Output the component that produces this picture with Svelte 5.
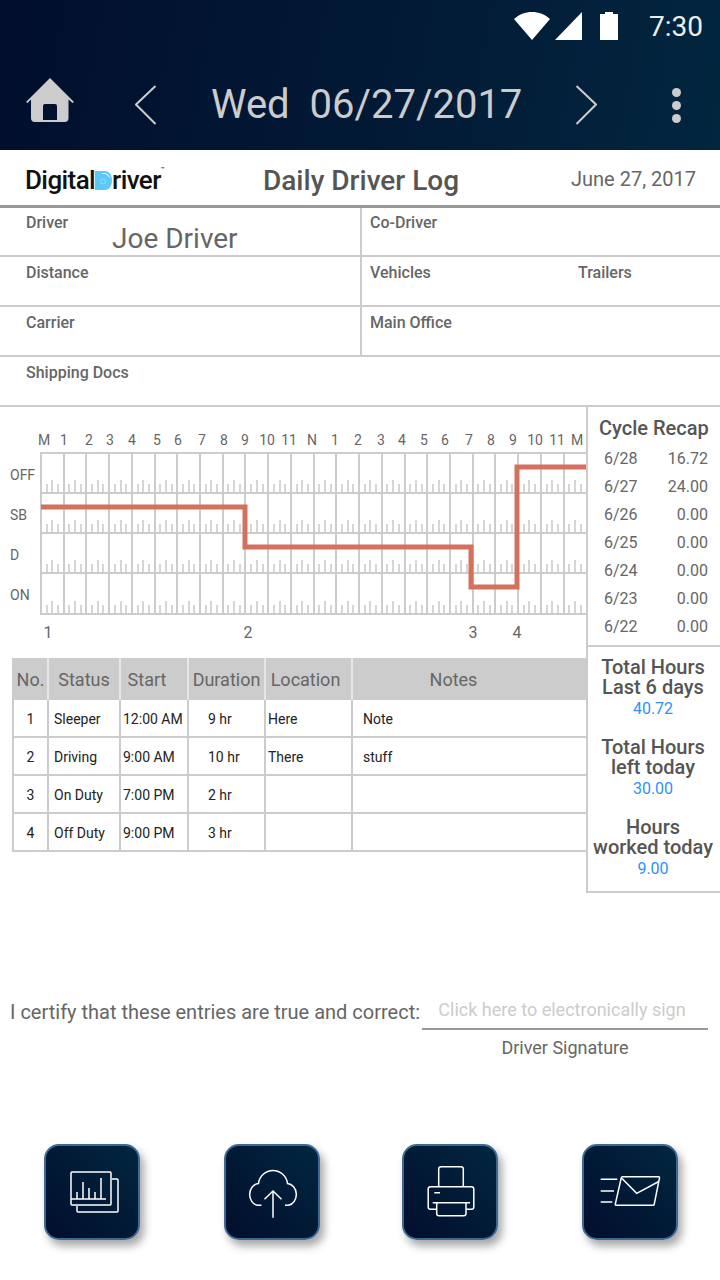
<script lang="ts">
  const hours = [
    ['M', 44], ['1', 64], ['2', 89], ['3', 110], ['4', 132], ['5', 157], ['6', 178], ['7', 202],
    ['8', 224], ['9', 245], ['10', 267], ['11', 289], ['N', 312], ['1', 335], ['2', 358], ['3', 381],
    ['4', 402], ['5', 424], ['6', 445], ['7', 469], ['8', 491], ['9', 513], ['10', 535], ['11', 557], ['M', 577]
  ];
  const statusRows = [['OFF', 475], ['SB', 515], ['D', 555], ['ON', 595]];
  const changeMarks = [['1', 48], ['2', 248], ['3', 473], ['4', 517]];

  const gridLeft = 41;
  const cell = 22.72;
  const rowBottoms = [493, 533, 573, 614];
  const columns = Array.from({ length: 24 }, (_, i) => gridLeft + i * cell);

  const logs = [
    { no: 1, status: 'Sleeper', start: '12:00 AM', duration: '9 hr', location: 'Here', notes: 'Note' },
    { no: 2, status: 'Driving', start: '9:00 AM', duration: '10 hr', location: 'There', notes: 'stuff' },
    { no: 3, status: 'On Duty', start: '7:00 PM', duration: '2 hr', location: '', notes: '' },
    { no: 4, status: 'Off Duty', start: '9:00 PM', duration: '3 hr', location: '', notes: '' }
  ];

  const recap = [
    ['6/28', '16.72'], ['6/27', '24.00'], ['6/26', '0.00'], ['6/25', '0.00'],
    ['6/24', '0.00'], ['6/23', '0.00'], ['6/22', '0.00']
  ];

  const totals = [
    { title: 'Total Hours', sub: 'Last 6 days', value: '40.72' },
    { title: 'Total Hours', sub: 'left today', value: '30.00' },
    { title: 'Hours', sub: 'worked today', value: '9.00' }
  ];
</script>

<div class="page">
  <header class="top">
    <div class="status-bar">
      <svg class="wifi" width="36" height="28" viewBox="0 0 36 28">
        <path d="M18 28L0 7C5 2.5 11 0 18 0s13 2.500 18 7z" fill="#fff" />
      </svg>
      <svg class="signal" width="27" height="28" viewBox="0 0 27 28">
        <path d="M27 0v28H0z" fill="#fff" />
      </svg>
      <svg class="battery" width="18" height="28" viewBox="0 0 18 28">
        <path d="M5 0h8v2h5v26H0V2h5z" fill="#fff" />
      </svg>
      <span class="clock">7:30</span>
    </div>
    <div class="toolbar">
      <svg class="home" width="48" height="44" viewBox="0 0 48 44">
        <path
          fill-rule="evenodd"
          d="M24 0l24 24-1.500 1-4-3.500V40a4 4 0 0 1-4 4H9a4 4 0 0 1-4-4V21.500L1.500 25 0 24zM19 26a2 2 0 0 0-2 2v14h14V28a2 2 0 0 0-2-2z"
          fill="#ccc"
        />
      </svg>
      <svg class="prev" width="22" height="40" viewBox="0 0 22 40">
        <path d="M20.500 1L1 19.500 20.500 39" fill="none" stroke="#ccc" stroke-width="2" />
      </svg>
      <span class="day">Wed  06/27/2017</span>
      <svg class="next" width="22" height="40" viewBox="0 0 22 40">
        <path d="M1.500 1L21 19.500 1.500 39" fill="none" stroke="#ccc" stroke-width="2" />
      </svg>
      <div class="dots"><i></i><i></i><i></i></div>
    </div>
  </header>

  <section class="title-row">
    <div class="logo">
      <span>Digital</span>
      <svg width="17" height="19" viewBox="0 0 17 19">
        <path d="M0 0h10c4 0 7 4 7 9.500S14 19 10 19H0z" fill="#5cc8f5" />
        <path d="M7 2.500h3a6 6 0 0 1 4.500 4" fill="none" stroke="#fff" stroke-width="1" />
        <circle cx="8" cy="10.500" r="2.500" fill="none" stroke="#a8e2fa" stroke-width="0.800" />
      </svg>
      <span>river</span>
      <span class="tm">™</span>
    </div>
    <h1>Daily Driver Log</h1>
    <span class="date">June 27, 2017</span>
  </section>

  <section class="form">
    <div class="row">
      <div class="field left">
        <label for="driver">Driver</label>
        <div class="value" id="driver">Joe Driver</div>
      </div>
      <div class="field"><span class="lbl">Co-Driver</span></div>
    </div>
    <div class="row">
      <div class="field left"><span class="lbl">Distance</span></div>
      <div class="field split">
        <span class="lbl">Vehicles</span>
        <span class="lbl">Trailers</span>
      </div>
    </div>
    <div class="row">
      <div class="field left"><span class="lbl">Carrier</span></div>
      <div class="field"><span class="lbl">Main Office</span></div>
    </div>
    <div class="row wide">
      <div class="field left"><span class="lbl">Shipping Docs</span></div>
    </div>
  </section>

  <section class="main">
    <div class="log">
      <svg class="chart" width="586" height="242" viewBox="0 407 586 242">
        {#each hours as [label, x]}
          <text x={x} y="445" text-anchor="middle" class="hour">{label}</text>
        {/each}
        {#each statusRows as [label, y]}
          <text x="10" y={Number(y) + 5} class="hour">{label}</text>
        {/each}

        {#each rowBottoms as bottom}
          {#each columns as x}
            <rect x={Math.round(x + cell * 0.25) - 1} y={bottom - 9} width="2" height="9" fill="#d6d6d6" />
            <rect x={Math.round(x + cell * 0.5) - 1} y={bottom - 13} width="2" height="13" fill="#d6d6d6" />
            <rect x={Math.round(x + cell * 0.75) - 1} y={bottom - 9} width="2" height="9" fill="#d6d6d6" />
          {/each}
        {/each}

        {#each columns as x}
          <line x1={Math.round(x)} x2={Math.round(x)} y1="453" y2="615" stroke="#ccc" stroke-width="2" />
        {/each}
        <line x1="40" x2="586" y1="453" y2="453" stroke="#ccc" stroke-width="2" />
        {#each rowBottoms as y}
          <line x1="40" x2="586" y1={y} y2={y} stroke="#ccc" stroke-width="2" />
        {/each}

        <path
          d="M41 507H245V547H471V587H517V467H586"
          fill="none"
          stroke="#d4705c"
          stroke-width="5"
        />

        {#each changeMarks as [label, x]}
          <text x={x} y="638" text-anchor="middle" class="mark">{label}</text>
        {/each}
      </svg>

      <table>
        <colgroup>
          <col style="width: 35px" />
          <col style="width: 72px" />
          <col style="width: 68px" />
          <col style="width: 77px" />
          <col style="width: 87px" />
          <col />
        </colgroup>
        <thead>
          <tr>
            <th>No.</th>
            <th>Status</th>
            <th class="h-start">Start</th>
            <th>Duration</th>
            <th class="h-location">Location</th>
            <th class="h-notes">Notes</th>
          </tr>
        </thead>
        <tbody>
          {#each logs as log}
            <tr>
              <td class="no">{log.no}</td>
              <td class="status">{log.status}</td>
              <td class="start">{log.start}</td>
              <td class="duration">{log.duration}</td>
              <td class="location">{log.location}</td>
              <td class="notes">{log.notes}</td>
            </tr>
          {/each}
        </tbody>
      </table>
    </div>

    <aside class="side">
      <div class="recap">
        <h2>Cycle Recap</h2>
        {#each recap as [day, amount]}
          <div class="recap-row"><span>{day}</span><span>{amount}</span></div>
        {/each}
      </div>
      <div class="totals">
        {#each totals as total}
          <div class="total">
            <h3>{total.title}<br />{total.sub}</h3>
            <span>{total.value}</span>
          </div>
        {/each}
      </div>
    </aside>
  </section>

  <section class="certify">
    <span class="statement">I certify that these entries are true and correct:</span>
    <div class="sign">
      <div class="sign-line">Click here to electronically sign</div>
      <div class="sign-caption">Driver Signature</div>
    </div>
  </section>

  <nav class="actions">
    <button type="button" aria-label="Reports">
      <svg viewBox="2 2 92 92">
        <path d="M28 28h38a1 1 0 0 1 1 1v31a1 1 0 0 1-1 1H28a1 1 0 0 1-1-1V29a1 1 0 0 1 1-1z" />
        <path d="M68 35h5a1 1 0 0 1 1 1v31a1 1 0 0 1-1 1H34a1 1 0 0 1-1-1v-5" />
        <path d="M27 55h35M33 55v-7M39 55V38M45 55V44M51 55v-7M57 55V34" />
      </svg>
    </button>
    <button type="button" aria-label="Upload">
      <svg viewBox="2 2 92 92">
        <path d="M37.500 61.300h-4a9.500 11 0 0 1 1-21.800 14.600 14.600 0 0 1 29 0 9.500 11 0 0 1 1 21.800H61" />
        <path d="M49 73.700V47M40.500 55.200L49 47l8.500 8.200" />
      </svg>
    </button>
    <button type="button" aria-label="Print">
      <svg viewBox="2 2 92 92">
        <path d="M36.700 42.700V25a2.300 2.300 0 0 1 2.300-2.300h20a2.300 2.300 0 0 1 2.300 2.300v17.700" />
        <path d="M34 65.300h-5.500a2.300 2.300 0 0 1-2.300-2.300V45a2.300 2.300 0 0 1 2.300-2.300h41a2.300 2.300 0 0 1 2.300 2.300v18a2.300 2.300 0 0 1-2.300 2.300H64" />
        <path d="M30.700 58.700h37.300M34.700 58.700V69.500a2.300 2.300 0 0 0 2.300 2.300h24.700a2.300 2.300 0 0 0 2.300-2.300V58.700M32.300 48.700H38" />
      </svg>
    </button>
    <button type="button" aria-label="Send by email">
      <svg viewBox="2 2 92 92">
        <path d="M40.500 32.700h36a1 1 0 0 1 1 1.200l-5.300 26.400a1.200 1.200 0 0 1-1.200 1H34.300a1 1 0 0 1-1-1.200L39.300 33.700a1.200 1.200 0 0 1 1.200-1z" />
        <path d="M39.500 34l15.200 15.300L76.800 37.500M18.700 35.300h16.600M18.700 47H32M18.700 58h11.600" />
      </svg>
    </button>
  </nav>
</div>

<style>
  :global(body) {
    margin: 0;
    background: #fff;
    font-family: Roboto, "Liberation Sans", sans-serif;
    color: #555;
  }

  .page {
    width: 720px;
    height: 1280px;
    overflow: hidden;
    background: #fff;
  }

  .top {
    height: 150px;
    background: linear-gradient(100deg, #010e2d 0%, #021a36 55%, #02263f 100%);
  }

  .status-bar {
    height: 50px;
    display: flex;
    align-items: flex-start;
    padding-top: 12px;
    box-sizing: border-box;
  }

  .wifi {
    margin-left: 514px;
  }

  .signal {
    margin-left: 5px;
  }

  .battery {
    margin-left: 18px;
  }

  .clock {
    margin-left: 31px;
    margin-top: 1px;
    font-size: 28px;
    line-height: 28px;
    color: #eee;
  }

  .toolbar {
    height: 100px;
    box-sizing: border-box;
    padding-top: 10px;
    display: flex;
    align-items: center;
  }

  .home {
    margin-left: 26px;
    margin-bottom: 10px;
  }

  .prev {
    margin-left: 61px;
  }

  .day {
    margin-left: 54px;
    width: 310px;
    font-size: 40px;
    line-height: 48px;
    color: #ccc;
    white-space: pre;
  }

  .next {
    margin-left: 54px;
  }

  .dots {
    margin-left: 75px;
    display: flex;
    flex-direction: column;
    gap: 4px;
  }

  .dots i {
    display: block;
    width: 9px;
    height: 9px;
    border-radius: 50%;
    background: #ccc;
  }

  .title-row {
    height: 58px;
    box-sizing: border-box;
    border-bottom: 3px solid #999;
    display: flex;
    align-items: center;
    padding: 6px 0 0 25px;
  }

  .logo {
    width: 238px;
    flex: none;
    margin-top: -2px;
    display: flex;
    align-items: center;
    font-size: 26px;
    font-weight: 500;
    letter-spacing: -0.6px;
    color: #111;
  }

  .logo svg {
    margin-top: 1px;
  }

  .tm {
    font-size: 6px;
    align-self: flex-start;
    letter-spacing: 0;
  }

  h1 {
    margin: 0;
    width: 308px;
    flex: none;
    font-size: 28px;
    font-weight: 500;
    color: #555;
  }

  .date {
    margin-top: -4px;
    font-size: 20px;
    color: #666;
    white-space: nowrap;
  }

  .row {
    height: 50px;
    box-sizing: border-box;
    border-bottom: 2px solid #ccc;
    display: grid;
    grid-template-columns: 362px 1fr;
  }

  .row:first-child {
    height: 49px;
  }

  .row.wide {
    grid-template-columns: 1fr;
  }

  .field {
    padding: 7px 0 0 8px;
    font-size: 16px;
    line-height: 18px;
  }

  .row:first-child .field {
    padding-top: 6px;
  }

  .field.left {
    padding-left: 26px;
    border-right: 2px solid #ccc;
  }

  .wide .field.left {
    border-right: 0;
  }

  .field.split {
    display: grid;
    grid-template-columns: 208px 1fr;
  }

  .lbl,
  label {
    font-size: 16px;
    font-weight: 500;
    color: #666;
  }

  .value {
    margin-top: -9px;
    padding-left: 86px;
    font-size: 28px;
    line-height: 32px;
    color: #666;
  }

  .main {
    display: flex;
    align-items: flex-start;
  }

  .log {
    width: 586px;
  }

  .chart {
    display: block;
  }

  .hour {
    font-size: 14px;
    fill: #666;
  }

  .mark {
    font-size: 16px;
    fill: #666;
  }

  table {
    margin-left: 12px;
    width: 574px;
    border-collapse: collapse;
    table-layout: fixed;
    margin-top: 9px;
  }

  th {
    height: 38px;
    padding: 2px 0 0;
    background: #ccc;
    border-left: 2px solid #e6e6e6;
    border-right: 2px solid #e6e6e6;
    font-size: 18px;
    font-weight: 400;
    color: #666;
    white-space: nowrap;
  }

  th:first-child {
    border-left-color: #ccc;
  }

  th:last-child {
    border-right: 0;
  }

  th.h-start {
    padding-right: 14px;
  }

  th.h-location {
    padding-right: 6px;
  }

  th.h-notes {
    padding-right: 32px;
  }

  td {
    height: 34px;
    padding: 2px 0 0 5px;
    border: 2px solid #ccc;
    font-size: 14px;
    color: #222;
    white-space: nowrap;
  }

  td:last-child {
    border-right: 0;
  }

  td.no {
    padding-left: 0;
    text-align: center;
  }

  td.start,
  td.location {
    padding-left: 2px;
  }

  td.duration {
    padding-left: 19px;
  }

  td.notes {
    padding-left: 10px;
  }

  .side {
    width: 134px;
    height: 486px;
    box-sizing: border-box;
    border-left: 2px solid #ccc;
    border-bottom: 2px solid #ccc;
  }

  .recap {
    height: 240px;
    box-sizing: border-box;
    border-bottom: 2px solid #ccc;
    padding: 9px 12px 0 16px;
  }

  h2 {
    margin: 0 -2px 5px -5px;
    font-size: 20px;
    line-height: 24px;
    font-weight: 500;
    color: #555;
    white-space: nowrap;
  }

  .recap-row {
    display: flex;
    justify-content: space-between;
    height: 28px;
    font-size: 16px;
    line-height: 28px;
    color: #666;
  }

  .totals {
    padding: 10px 2px 0 0;
  }

  .total {
    height: 80px;
    text-align: center;
    font-size: 16px;
    line-height: 20px;
    color: #2f8fff;
  }

  .total span {
    display: block;
    margin-top: 2px;
  }

  h3 {
    margin: 0;
    font-size: 20px;
    line-height: 20px;
    font-weight: 500;
    color: #555;
    white-space: nowrap;
  }

  .certify {
    margin-top: 104px;
    display: flex;
    align-items: flex-start;
    padding-left: 10px;
  }

  .statement {
    width: 412px;
    font-size: 20px;
    line-height: 30px;
    color: #666;
    white-space: nowrap;
  }

  .sign {
    width: 286px;
    text-align: center;
  }

  .sign-line {
    height: 31px;
    padding-right: 6px;
    box-sizing: content-box;
    width: 280px;
    border-bottom: 2px solid #999;
    font-size: 18px;
    line-height: 26px;
    color: #ccc;
  }

  .sign-caption {
    margin-top: 8px;
    font-size: 18px;
    line-height: 20px;
    color: #666;
  }

  .actions {
    margin-top: 86px;
    padding-left: 44px;
    display: flex;
    gap: 84px;
  }

  button {
    width: 96px;
    height: 96px;
    padding: 0;
    box-sizing: border-box;
    border: 2px solid #3c6a92;
    border-radius: 15px;
    background: linear-gradient(45deg, #010e2d, #02263f);
    box-shadow: 4px 6px 9px rgba(0, 0, 0, 0.35);
  }

  button:nth-child(3) {
    margin-left: -2px;
  }

  button svg {
    display: block;
    width: 92px;
    height: 92px;
    fill: none;
    stroke: #fff;
    stroke-width: 1.500;
  }
</style>
